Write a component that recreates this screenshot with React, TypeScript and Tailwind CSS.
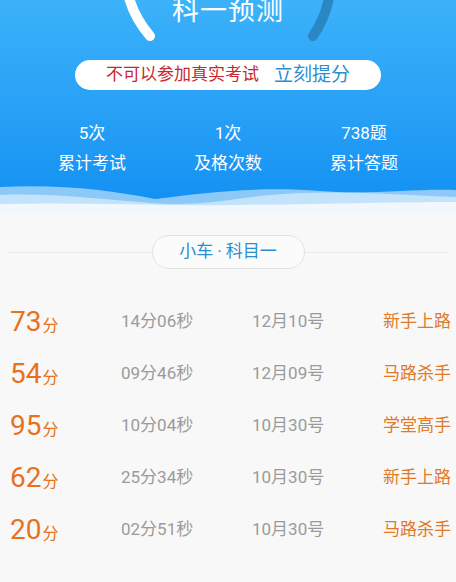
import React from "react";

const records = [
  { score: "73", time: "14分06秒", date: "12月10号", level: "新手上路" },
  { score: "54", time: "09分46秒", date: "12月09号", level: "马路杀手" },
  { score: "95", time: "10分04秒", date: "10月30号", level: "学堂高手" },
  { score: "62", time: "25分34秒", date: "10月30号", level: "新手上路" },
  { score: "20", time: "02分51秒", date: "10月30号", level: "马路杀手" },
];

const stats = [
  { value: "5次", label: "累计考试" },
  { value: "1次", label: "及格次数" },
  { value: "738题", label: "累计答题" },
];

function Arc() {
  // ring partly above the top edge: white on the left, darker blue on the right
  return (
    <svg className="absolute left-0 top-0" width="456" height="60" viewBox="0 0 456 60">
      <path
        d="M 129 -2 A 104 104 0 0 0 150 36"
        fill="none"
        stroke="#ffffff"
        strokeWidth="10"
        strokeLinecap="round"
      />
      <path
        d="M 329 -2 A 104 104 0 0 1 313 36"
        fill="none"
        stroke="#2b86c4"
        strokeWidth="10"
        strokeLinecap="round"
      />
    </svg>
  );
}

function Wave() {
  return (
    <svg className="block" width="456" height="32" viewBox="0 0 456 32">
      <path
        d="M0 7 C 60 4, 110 10, 155 19 C 200 13, 260 6, 320 11 C 370 15, 420 8, 456 10 L456 32 L0 32 Z"
        fill="#8cc9f8"
      />
      <path
        d="M0 15 C 50 13, 100 19, 150 23 C 200 27, 230 19, 270 15 C 330 9, 400 15, 456 17 L456 32 L0 32 Z"
        fill="#c3e3fb"
      />
      <path
        d="M0 24 C 80 22, 160 26, 240 25 C 320 24, 400 22, 456 22 L456 32 L0 32 Z"
        fill="#f1f7fd"
      />
    </svg>
  );
}

export default function App() {
  return (
    <div
      className="w-[456px] h-[582px] overflow-hidden bg-[#f8f8f8]"
      style={{ fontFamily: 'Roboto, "Noto Sans CJK SC", sans-serif' }}
    >
      {/* Header */}
      <div className="relative bg-gradient-to-b from-[#3cb2fa] to-[#0f8ff2]">
        <Arc />
        <div className="relative flex flex-col items-center">
          <div className="-mt-[6px] text-[27px] leading-[34px] text-white tracking-[1px]">科一预测</div>
          <div className="mt-[32px] w-[306px] h-[30px] rounded-full bg-white flex items-center justify-center gap-[15px]">
            <span className="text-[17px] text-[#c9262e]">不可以参加真实考试</span>
            <span className="text-[19px] text-[#2a8ed2]">立刻提分</span>
          </div>
          <div className="mt-[32px] w-full px-[24px] grid grid-cols-3 text-white">
            {stats.map((s) => (
              <div key={s.label} className="flex flex-col items-center">
                <span className="text-[17px] leading-[22px]">{s.value}</span>
                <span className="mt-[8px] text-[17px] leading-[22px]">{s.label}</span>
              </div>
            ))}
          </div>
        </div>
        <div className="mt-[6px]">
          <Wave />
        </div>
      </div>

      {/* Subject tag */}
      <div className="mt-[23px] flex items-center px-[8px]">
        <div className="flex-1 h-px bg-[#ececec]" />
        <div className="w-[153px] h-[34px] rounded-full border border-[#e3e3e3] bg-[#fbfbfb] flex items-center justify-center text-[17px] text-[#2a8ed2]">
          小车<span className="mx-[4px]">·</span>科目一
        </div>
        <div className="flex-1 h-px bg-[#ececec]" />
      </div>

      {/* Records */}
      <div className="mt-[38px] flex flex-col gap-[22px]">
        {records.map((r, i) => (
          <div key={i} className="flex items-center h-[30px]">
            <div className="w-[121px] pl-[10px] flex items-baseline text-[#e8711d]">
              <span className="text-[28px] leading-[30px]">{r.score}</span>
              <span className="text-[16px] ml-[1px]">分</span>
            </div>
            <div className="w-[131px] text-[17px] text-[#9b9b9b]">{r.time}</div>
            <div className="w-[131px] text-[17px] text-[#9b9b9b]">{r.date}</div>
            <div className="text-[17px] text-[#e07a28] whitespace-nowrap">{r.level}</div>
          </div>
        ))}
      </div>
    </div>
  );
}
